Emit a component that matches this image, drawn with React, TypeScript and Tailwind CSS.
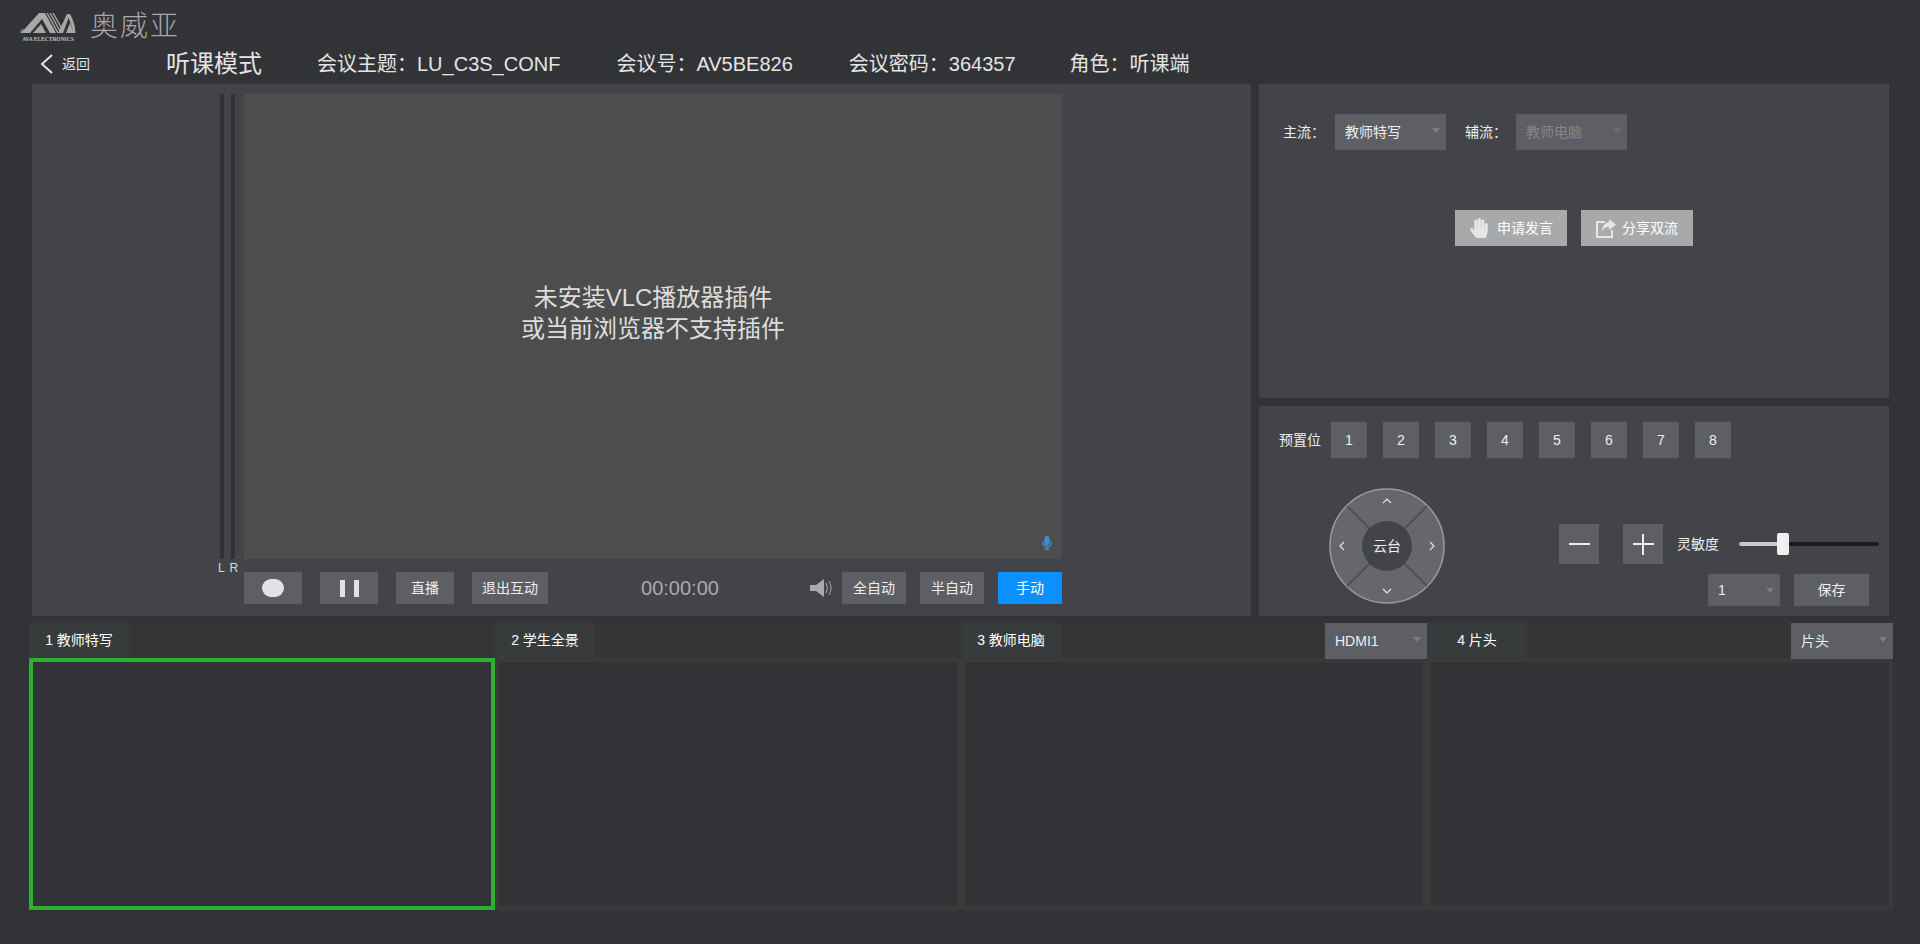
import { FaHandPaper, FaMicrophone } from 'react-icons/fa';

const cjk = 'font-["Liberation_Sans","Noto_Sans_CJK_SC",sans-serif]';

function Caret({ dim }: { dim?: boolean }) {
  return (
    <span
      className={
        'absolute right-[6px] top-[14px] h-0 w-0 border-x-[4px] border-t-[5px] border-x-transparent ' +
        (dim ? 'border-t-[#6c6d71]' : 'border-t-[#7c7d81]')
      }
    />
  );
}

function Select({ label, className, disabled }: { label: string; className: string; disabled?: boolean }) {
  return (
    <div className={'relative flex items-center bg-[#5e5f64] pl-[10px] text-[14px] ' + (disabled ? 'text-[#85868a] ' : 'text-[#eeeeee] ') + className}>
      {label}
      <Caret dim={disabled} />
    </div>
  );
}

function Btn({ children, className, primary }: { children: React.ReactNode; className: string; primary?: boolean }) {
  return (
    <div className={'flex h-[32px] items-center justify-center text-[14px] ' + (primary ? 'bg-[#0c90ff] text-white ' : 'bg-[#5e5f64] text-[#eeeeee] ') + className}>
      {children}
    </div>
  );
}

function Logo() {
  return (
    <div className="flex h-[29px] w-[56px] flex-col items-center">
      <svg width="56" height="21" viewBox="0 0 56 21" className="shrink-0">
        {/* left A */}
        <path d="M1 20 L19 0 H25 L36 20 H30 L22 6 L10 20 Z" fill="#a8a8a8" />
        <path d="M13 20 L21 11 L26 20 Z" fill="#a8a8a8" />
        <path d="M1 17 L8 17 M0 19 L7 19" stroke="#a8a8a8" strokeWidth="1" />
        {/* striped V */}
        <path d="M27 0 L38 20 M30 0 L40 18 M33 0 L41.500 15" stroke="#a8a8a8" strokeWidth="1.400" fill="none" />
        <path d="M38 20 L47 1 H50 L43 20 Z" fill="#a8a8a8" />
        {/* right A */}
        <path d="M46 20 L50 10 L54 20 Z M48 3 L50 1 C53 6 55 12 55.500 20 H54 Z" fill="#a8a8a8" />
      </svg>
      <span className="mt-[2px] whitespace-nowrap text-[5.500px] leading-[7px] font-bold text-[#c0c0c0] font-['Liberation_Serif',serif]">AVA ELECTRONICS</span>
    </div>
  );
}

function PtzPad() {
  return (
    <svg width="116" height="116" viewBox="0 0 116 116" className="shrink-0">
      <circle cx="58" cy="58" r="57" fill="#66676b" stroke="#9a9b9e" strokeWidth="1.500" />
      <path d="M18 18 L98 98 M98 18 L18 98" stroke="#4b4c50" strokeWidth="1.500" />
      <circle cx="58" cy="58" r="25" fill="#434449" />
      <path d="M54 15 L58 11 L62 15 M54 101 L58 105 L62 101 M15 54 L11 58 L15 62 M101 54 L105 58 L101 62" fill="none" stroke="#e4e4e4" strokeWidth="1.200" />
    </svg>
  );
}

const thumbs = [
  { label: '1 教师特写', active: true },
  { label: '2 学生全景' },
  { label: '3 教师电脑', select: 'HDMI1' },
  { label: '4 片头', select: '片头' },
];

export default function App() {
  return (
    <div className={'flex h-[944px] w-full flex-col overflow-hidden bg-[#323337] text-[#e4e4e4] ' + cjk}>
      {/* logo */}
      <div className="flex h-[48px] items-start pl-[20px] pt-[13px]">
        <Logo />
        <span className="ml-[14px] text-[28px] leading-[28px] font-light tracking-[2px] text-[#a8a8a8]">奥威亚</span>
      </div>

      {/* meeting info */}
      <div className="flex h-[36px] items-center pb-[4px]">
        <svg width="16" height="22" viewBox="0 0 16 22" className="ml-[39px]">
          <path d="M13 2 L3 11 L13 20" fill="none" stroke="#e4e4e4" strokeWidth="2" />
        </svg>
        <span className="ml-[7px] text-[14px] leading-none">返回</span>
        <span className="ml-[76px] text-[24px] leading-none">听课模式</span>
        <span className="ml-[55px] text-[20px] leading-none">会议主题：LU_C3S_CONF</span>
        <span className="ml-[56px] text-[20px] leading-none">会议号：AV5BE826</span>
        <span className="ml-[56px] text-[20px] leading-none">会议密码：364357</span>
        <span className="ml-[54px] text-[20px] leading-none">角色：听课端</span>
      </div>

      {/* main panels */}
      <div className="ml-[32px] flex h-[532px] w-[1857px] gap-[8px]">
        <div className="flex w-[1219px] flex-col bg-[#434449] pt-[10px] pl-[188px]">
          <div className="flex h-[465px]">
            <div className="flex gap-[7px] pr-[9px]">
              <div className="w-[4px] bg-[#323234]" />
              <div className="w-[4px] bg-[#323234]" />
            </div>
            <div className="relative flex w-[818px] flex-col items-center justify-center bg-[#4d4d4d] pb-[28px] text-[24px] leading-[31px] text-[#dddddd]">
              <p>未安装VLC播放器插件</p>
              <p>或当前浏览器不支持插件</p>
              <FaMicrophone className="absolute right-[8px] bottom-[9px] text-[14px] text-[#3a8fdc]" />
            </div>
          </div>
          <div className="flex h-[13px]">
            <span className="-ml-[2px] mt-[2px] w-[24px] text-[12px] leading-[14px] tracking-[1px] whitespace-nowrap text-[#d8d8d8]">L R</span>
          </div>
          <div className="ml-[24px] flex w-[818px]">
            <Btn className="w-[58px]"><span className="h-[18px] w-[22px] rounded-full bg-[#e2e2e2]" /></Btn>
            <Btn className="ml-[18px] w-[58px] gap-[9px]">
              <span className="h-[17px] w-[5px] bg-[#e2e2e2]" />
              <span className="h-[17px] w-[5px] bg-[#e2e2e2]" />
            </Btn>
            <Btn className="ml-[18px] w-[58px]">直播</Btn>
            <Btn className="ml-[18px] w-[76px]">退出互动</Btn>
            <span className="ml-[92px] w-[80px] text-center text-[20px] leading-[32px] text-[#a9a9a9]">00:00:00</span>
            <svg width="24" height="20" viewBox="0 0 24 20" className="ml-[90px] mt-[6px]">
              <path d="M0 7 H6 L14 1 V19 L6 13 H0 Z" fill="#a9a9a9" />
              <path d="M16 5 Q19 10 16 15 M19 3 Q23 10 19 17" fill="none" stroke="#a9a9a9" strokeWidth="1" />
            </svg>
            <Btn className="ml-[8px] w-[64px]">全自动</Btn>
            <Btn className="ml-[14px] w-[64px]">半自动</Btn>
            <Btn className="ml-[14px] w-[64px]" primary>手动</Btn>
          </div>
        </div>

        <div className="flex w-[630px] flex-col gap-[8px]">
          {/* streams */}
          <div className="flex h-[314px] flex-col bg-[#434449] pt-[30px] pl-[24px]">
            <div className="flex h-[36px] items-center text-[14px] text-[#eeeeee]">
              <span className="w-[52px]">主流：</span>
              <Select label="教师特写" className="h-[36px] w-[111px]" />
              <span className="ml-[19px] w-[51px]">辅流：</span>
              <Select label="教师电脑" className="h-[36px] w-[111px]" disabled />
            </div>
            <div className="mt-[60px] ml-[172px] flex gap-[14px] text-[14px] text-white">
              <div className="flex h-[36px] w-[112px] items-center justify-center gap-[8px] bg-[#a9a9a9]">
                <FaHandPaper className="text-[20px] text-[#e6e6e6]" />
                申请发言
              </div>
              <div className="flex h-[36px] w-[112px] items-center justify-center gap-[6px] bg-[#a9a9a9]">
                <svg width="20" height="20" viewBox="0 0 20 20">
                  <path d="M9 4 H1 V19 H16 V12" fill="none" stroke="#e6e6e6" strokeWidth="2" />
                  <path d="M13 1 L20 6.500 L13 12 V9 C9 9 7 11 6 14 C6 9 8 5 13 4 Z" fill="#e6e6e6" />
                </svg>
                分享双流
              </div>
            </div>
          </div>

          {/* camera control */}
          <div className="flex h-[210px] flex-col bg-[#434449] pt-[16px] pl-[20px]">
            <div className="flex h-[36px] items-center">
              <span className="w-[52px] text-[14px] text-[#eeeeee]">预置位</span>
              <div className="flex gap-[16px]">
                {[1, 2, 3, 4, 5, 6, 7, 8].map((n) => (
                  <div key={n} className="flex h-[36px] w-[36px] items-center justify-center bg-[#5e5f64] text-[14px] text-[#eeeeee]">{n}</div>
                ))}
              </div>
            </div>
            <div className="mt-[30px] flex">
              <div className="relative ml-[50px] h-[116px] w-[116px]">
                <PtzPad />
                <span className="absolute inset-0 flex items-center justify-center text-[14px] text-[#eeeeee]">云台</span>
              </div>
              <div className="ml-[114px] flex flex-col">
                <div className="mt-[36px] flex items-center">
                  <div className="flex h-[40px] w-[40px] items-center justify-center bg-[#5e5f64]"><span className="h-[2px] w-[21px] bg-[#eeeeee]" /></div>
                  <div className="relative ml-[24px] flex h-[40px] w-[40px] items-center justify-center bg-[#5e5f64]">
                    <span className="h-[2px] w-[21px] bg-[#eeeeee]" />
                    <span className="absolute h-[21px] w-[2px] bg-[#eeeeee]" />
                  </div>
                  <span className="ml-[14px] text-[14px] text-[#eeeeee]">灵敏度</span>
                  <div className="relative ml-[20px] flex h-[4px] w-[140px] rounded-full bg-[#1c1c1f]">
                    <div className="h-[4px] w-[40px] rounded-full bg-[#c8c8c8]" />
                    <span className="absolute top-[-9px] left-[38px] h-[22px] w-[12px] rounded-[2px] bg-[#efefef]" />
                  </div>
                </div>
                <div className="mt-[10px] ml-[149px] flex gap-[14px]">
                  <Select label="1" className="h-[32px] w-[72px]" />
                  <Btn className="w-[75px]">保存</Btn>
                </div>
              </div>
            </div>
          </div>
        </div>
      </div>

      {/* thumbnails */}
      <div className="mt-[7px] ml-[29px] grid w-[1864px] grid-cols-4">
        {thumbs.map((t) => (
          <div key={t.label} className="flex flex-col">
            <div className="flex h-[35px] items-start justify-between bg-[#353535]">
              <div className="flex h-[35px] w-[100px] items-center justify-center bg-[#383b3c] text-[14px] text-white">{t.label}</div>
              {t.select && <Select label={t.select} className="relative z-10 h-[36px] w-[102px]" />}
            </div>
            <div className={'h-[252px] border-[4px] bg-[#323337] ' + (t.active ? 'border-[#2bb02f]' : 'border-[#3a3a38]')} />
          </div>
        ))}
      </div>
    </div>
  );
}
